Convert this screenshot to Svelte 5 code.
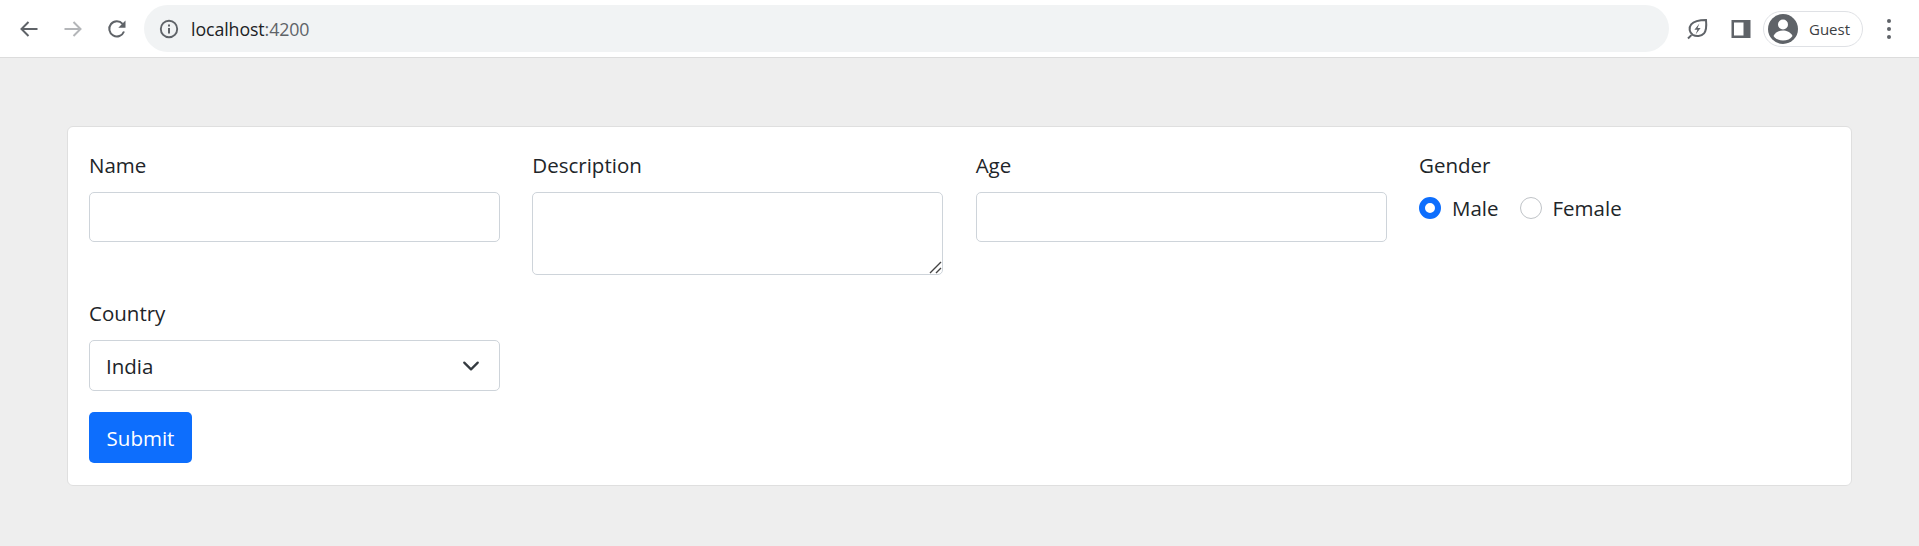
<script>
	let gender = 'male';
	let country = 'India';
	const countries = ['India', 'USA', 'UK'];
</script>

<div class="toolbar">
	<button class="nav" aria-label="Back">
		<svg width="24" height="24" viewBox="0 0 24 24"><path d="M20.500 12H5M11.500 5l-7 7 7 7" fill="none" stroke="#5f6368" stroke-width="2" /></svg>
	</button>
	<button class="nav" aria-label="Forward">
		<svg width="24" height="24" viewBox="0 0 24 24"><path d="M3.500 12H19M12.500 5l7 7-7 7" fill="none" stroke="#b4b6b9" stroke-width="2" /></svg>
	</button>
	<button class="nav" aria-label="Reload">
		<svg width="24" height="24" viewBox="0 0 24 24"><path d="M19 14.500A7.600 7.600 0 1 1 17.600 6.800" fill="none" stroke="#5f6368" stroke-width="2" /><path d="M20.500 3.500v7.200h-7.200z" fill="#5f6368" /></svg>
	</button>
	<div class="omnibox">
		<svg width="20" height="20" viewBox="0 0 20 20"><circle cx="10" cy="10" r="8.200" fill="none" stroke="#5f6368" stroke-width="1.900" /><path d="M9 9h2v5.400H9zM9 5.600h2v2H9z" fill="#5f6368" /></svg>
		<span class="url">localhost<span class="port">:4200</span></span>
	</div>
	<button class="nav" aria-label="Energy saver">
		<svg width="24" height="24" viewBox="0 0 24 24"><path d="M3 21.500l3.400-3.400M21 3c.6 5.800.4 10.500-2 13.400-2.800 3.200-7.800 3.400-11.200 1.400C4.400 15.600 3.400 10.800 6.200 7.400 9.400 3.600 15.800 3 21 3z" fill="none" stroke="#5f6368" stroke-width="2" /><path d="M14.400 6.400l-5 6.400h3l-1.800 4.600 5-6.400h-3z" fill="#5f6368" /></svg>
	</button>
	<button class="nav" aria-label="Side panel">
		<svg width="20" height="20" viewBox="0 0 20 20"><path d="M0.500 1h19v18h-19z M3 3.500v13h9.500v-13z" fill="#5f6368" fill-rule="evenodd" /></svg>
	</button>
	<div class="profile">
		<svg width="30" height="30" viewBox="0 0 30 30"><circle cx="15" cy="15" r="15" fill="#5f6368" /><circle cx="15" cy="10.500" r="5" fill="#fff" /><path d="M5.500 22c2-4 6-5.500 9.500-5.500s7.500 1.500 9.500 5.500c-2 3-5.500 4.500-9.500 4.500S7.500 25 5.500 22z" fill="#fff" /></svg>
		<span>Guest</span>
	</div>
	<div class="menu" aria-label="Menu"><i></i><i></i><i></i></div>
</div>

<main>
	<form class="card">
		<div class="row">
			<div class="field">
				<label for="name">Name</label>
				<input id="name" type="text" />
			</div>
			<div class="field">
				<label for="description">Description</label>
				<textarea id="description"></textarea>
			</div>
			<div class="field">
				<label for="age">Age</label>
				<input id="age" type="text" />
			</div>
			<div class="field">
				<span class="label">Gender</span>
				<div class="radios">
					<label class="radio"><input type="radio" bind:group={gender} value="male" />Male</label>
					<label class="radio"><input type="radio" bind:group={gender} value="female" />Female</label>
				</div>
			</div>
		</div>
		<div class="row second">
			<div class="field">
				<label for="country">Country</label>
				<select id="country" bind:value={country}>
					{#each countries as c}
						<option value={c}>{c}</option>
					{/each}
				</select>
			</div>
		</div>
		<button type="button" class="submit">Submit</button>
	</form>
</main>

<style>
	:global(body) {
		background: #eeeeee;
		font-family: 'Open Sans', 'Noto Sans', sans-serif;
		color: #212529;
	}

	.toolbar {
		display: flex;
		align-items: center;
		height: 58px;
		box-sizing: border-box;
		padding: 0 28px 0 7px;
		background: #fff;
		border-bottom: 1px solid #dcdcdc;
		margin-bottom: 68px;
	}

	.nav {
		display: flex;
		align-items: center;
		justify-content: center;
		width: 44px;
		height: 44px;
		padding: 0;
		border: 0;
		background: none;
	}

	.omnibox {
		display: flex;
		align-items: center;
		gap: 12px;
		flex: 1;
		height: 47px;
		margin: 0 6px 0 5px;
		padding-left: 15px;
		background: #f1f3f4;
		border-radius: 24px;
	}

	.url {
		font-size: 17.800px;
		letter-spacing: -0.100px;
		color: #202124;
	}

	.port {
		color: #5f6368;
	}

	.profile {
		display: flex;
		align-items: center;
		gap: 11px;
		width: 100px;
		height: 36px;
		box-sizing: border-box;
		padding-left: 4px;
		border: 1px solid #dfe1e5;
		border-radius: 18px;
		font-size: 15px;
		color: #3c4043;
	}

	.menu {
		display: flex;
		flex-direction: column;
		align-items: center;
		gap: 4px;
		margin-left: 24px;
	}

	.menu i {
		width: 4px;
		height: 4px;
		border-radius: 50%;
		background: #5f6368;
	}

	main {
		padding: 0 67px;
	}

	.card {
		box-sizing: border-box;
		height: 360px;
		padding: 24px 21px 21px;
		background: #fff;
		border: 1px solid #dfdfdf;
		border-radius: 6px;
	}

	.row {
		display: grid;
		grid-template-columns: repeat(4, 411px);
		column-gap: 32.330px;
	}

	.second {
		margin-top: 24px;
	}

	.field {
		display: flex;
		flex-direction: column;
		align-items: stretch;
	}

	.field > label,
	.label {
		font-size: 20.500px;
		line-height: 28px;
		margin-bottom: 13px;
	}

	input[type='text'],
	textarea,
	select {
		box-sizing: border-box;
		width: 100%;
		height: 50px;
		margin: 0;
		padding: 7px 16px;
		font: inherit;
		font-size: 20.500px;
		color: #212529;
		background-color: #fff;
		border: 1px solid #ced4da;
		border-radius: 5px;
		outline: none;
	}

	textarea {
		display: block;
		height: 83px;
		resize: vertical;
	}

	textarea::-webkit-resizer {
		background: url("data:image/svg+xml,%3csvg xmlns='http://www.w3.org/2000/svg' viewBox='0 0 15 15'%3e%3cpath fill='none' stroke='%23444' stroke-width='1.400' d='M3 14L14 3M9 14l5-5'/%3e%3c/svg%3e") no-repeat;
	}

	select {
		height: 51px;
		appearance: none;
		background-image: url("data:image/svg+xml,%3csvg xmlns='http://www.w3.org/2000/svg' viewBox='0 0 16 16'%3e%3cpath fill='none' stroke='%23343a40' stroke-linecap='round' stroke-linejoin='round' stroke-width='2' d='M2 5l6 6 6-6'/%3e%3c/svg%3e");
		background-repeat: no-repeat;
		background-position: right 19px center;
		background-size: 18px 18px;
	}

	.radios {
		display: flex;
		align-items: center;
		gap: 21px;
		height: 34px;
		margin-top: -1px;
	}

	.radio {
		display: flex;
		align-items: center;
		gap: 11px;
		font-size: 20.500px;
	}

	.radio input {
		appearance: none;
		box-sizing: border-box;
		width: 22px;
		height: 22px;
		margin: 0;
		background: #fff;
		border: 1px solid #bfc3c7;
		border-radius: 50%;
	}

	.radio input:checked {
		background: #fff;
		border: 6px solid #0d6efd;
	}

	.submit {
		display: block;
		width: 103px;
		height: 51px;
		margin-top: 21px;
		padding: 0;
		font: inherit;
		font-size: 20.500px;
		color: #fff;
		background: #0d6efd;
		border: 0;
		border-radius: 5px;
	}
</style>
